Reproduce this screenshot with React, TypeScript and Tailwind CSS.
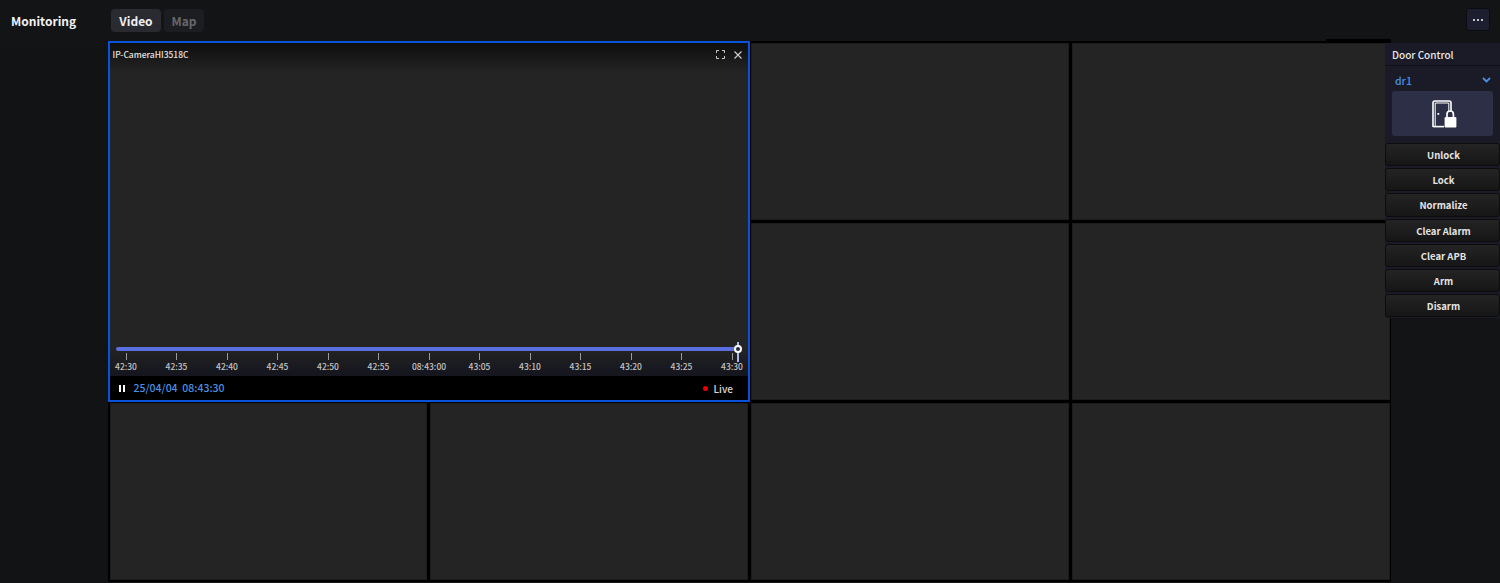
const FONT = "font-['Noto_Sans_CJK_KR','Noto_Sans',sans-serif]";

const ticks = ["42:30","42:35","42:40","42:45","42:50","42:55","08:43:00","43:05","43:10","43:15","43:20","43:25","43:30"];
const actions = ["Unlock","Lock","Normalize","Clear Alarm","Clear APB","Arm","Disarm"];

function Cell() {
  return <div className="bg-[#242424] border border-[#1c1c1c]" />;
}

function DoorIcon() {
  return (
    <svg width="25" height="28" viewBox="0 0 25 28" fill="none">
      <path d="M1 27V3a2 2 0 0 1 2-2h14a2 2 0 0 1 2 2v9" stroke="#fff" strokeWidth="1.6" />
      <path d="M3.2 26V3h13.6v8.5" stroke="#fff" strokeWidth="1" />
      <path d="M1 26.6h11" stroke="#fff" strokeWidth="1.6" />
      <rect x="5.4" y="13" width="1.8" height="1.8" fill="#fff" />
      <path d="M15 17v-2.8a3.2 3.2 0 0 1 6.4 0V17" stroke="#fff" strokeWidth="1.7" />
      <rect x="12.6" y="17" width="11.8" height="10.4" rx="1" fill="#fff" />
    </svg>
  );
}

function VideoTile() {
  return (
    <div className="col-span-2 row-span-2 -m-[2px] flex flex-col border-2 border-[#0a52dc] bg-[#242424] min-h-0">
      <div className="h-[29px] flex items-center justify-between pl-[3px] pr-[6px] pb-[5px] bg-gradient-to-b from-[#0e0e0e] to-[#242424]">
        <span className="text-[8.5px] font-medium text-[#e4e4e4]">IP-CameraHI3518C</span>
        <div className="flex items-center gap-[9px] text-[#c8c8c8]">
          <svg width="9" height="9" viewBox="0 0 9 9" fill="none" stroke="#c8c8c8" strokeWidth="1">
            <path d="M.5 3V.5H3M6 .5h2.5V3M8.5 6v2.5H6M3 8.5H.5V6" />
          </svg>
          <svg width="8" height="8" viewBox="0 0 8 8" fill="none" stroke="#d0d0d0" strokeWidth="1.1">
            <path d="M.5.5l7 7M7.5.5l-7 7" />
          </svg>
        </div>
      </div>
      <div className="flex-1" />
      <div className="relative h-[29px] bg-gradient-to-b from-[#242424] to-[#15161e] px-[6px]">
        <div className="h-[4px] w-[622px] bg-[#5a6fe0] rounded-sm" />
        <div className="absolute left-[627px] -top-[5px] w-[2px] h-[20px] bg-[#a8b8f0]" />
        <div className="absolute left-[624px] -top-[2px] w-[8px] h-[8px] rounded-full border-2 border-white bg-[#23283f]" />
        <div className="flex justify-between w-[607px] ml-[10px] mt-[2px]">
          {ticks.map((t, i) => (
            <div key={i} className="relative w-px h-[7px] bg-[#9a9a9a]">
              <span className="absolute top-[7px] left-1/2 -translate-x-1/2 text-[8.5px] leading-[12px] font-medium text-[#c4c4c4] whitespace-nowrap">{t}</span>
            </div>
          ))}
        </div>
      </div>
      <div className="h-[24px] bg-black flex items-center pl-[9px] pr-[15px]">
        <div className="flex gap-[2px] mr-[9px]">
          <span className="w-[2px] h-[7px] bg-white" />
          <span className="w-[2px] h-[7px] bg-white" />
        </div>
        <span className="text-[10.5px] font-medium text-[#4a90e2] whitespace-pre">25/04/04  08:43:30</span>
        <span className="ml-auto w-[5px] h-[5px] rounded-full bg-[#f00000] mr-[5px]" />
        <span className="text-[10px] font-medium text-[#d8d8d8]">Live</span>
      </div>
    </div>
  );
}

export default function App() {
  return (
    <div className={`relative w-[1500px] h-[583px] overflow-hidden bg-[#131416] flex flex-col ${FONT}`}>
      <header className="h-[41px] shrink-0 flex items-center">
        <div className="w-[111px] pl-[11px] text-[12px] font-bold text-[#f2f2f2]">Monitoring</div>
        <div className="flex gap-[3px]">
          <div className="w-[50px] h-[23px] flex items-center justify-center rounded-[4px] bg-[#2a2b30] text-[12px] font-bold text-[#f0f0f0]">Video</div>
          <div className="w-[40px] h-[23px] flex items-center justify-center rounded-[4px] bg-[#1c1d20] text-[12px] font-bold text-[#66676a]">Map</div>
        </div>
        <div className="ml-auto mr-[10px] mb-[2px] w-[24px] h-[23px] rounded-[3px] bg-[#1d1e30] border border-[#0c0c10] flex items-center justify-center gap-[2px]">
          <span className="w-[2px] h-[2px] rounded-full bg-white" />
          <span className="w-[2px] h-[2px] rounded-full bg-white" />
          <span className="w-[2px] h-[2px] rounded-full bg-white" />
        </div>
      </header>

      <div className="flex-1 flex min-h-0">
        <div className="w-[108px] shrink-0 bg-[#121315]" />
        <main className="w-[1283px] shrink-0 h-[541px] bg-black p-[1.5px] grid grid-cols-4 grid-rows-3 gap-[3px]">
          <VideoTile />
          {Array.from({ length: 8 }).map((_, i) => <Cell key={i} />)}
        </main>
        <div className="flex-1 bg-[#131416]" />
      </div>

      <div className="absolute left-[1326px] top-[39px] w-[65px] h-[2px] bg-black" />

      <aside className="absolute left-[1385px] top-[43px] w-[115px] h-[275px] bg-[#1a1b27] flex flex-col">
        <div className="h-[23px] flex items-center pl-[7px] pt-[1px] text-[10px] font-medium text-[#e8e8e8] border-b border-[#101118]">Door Control</div>
        <div className="h-[25px] flex items-center justify-between pl-[10px] pr-[9px] pt-[5px] text-[10.5px] font-medium text-[#4a90e2]">
          <span>dr1</span>
          <svg width="9" height="6" viewBox="0 0 9 6" fill="none" stroke="#4a90e2" strokeWidth="1.8" className="-mt-[3px]"><path d="M1 1l3.5 3.5L8 1" /></svg>
        </div>
        <div className="mx-[7px] h-[45px] rounded-[3px] bg-[#2d2f47] flex items-center justify-center pl-[3px]"><DoorIcon /></div>
        <div className="mt-[7px] flex flex-col gap-[2px]">
          {actions.map((a) => (
            <button key={a} className="h-[23.2px] rounded-[3px] bg-gradient-to-b from-[#242424] to-[#161616] border border-[#0c0c0c] text-[9.5px] font-bold text-[#e4e4e4] flex items-center justify-center pt-[1px] pl-[2px]">{a}</button>
          ))}
        </div>
      </aside>
    </div>
  );
}
